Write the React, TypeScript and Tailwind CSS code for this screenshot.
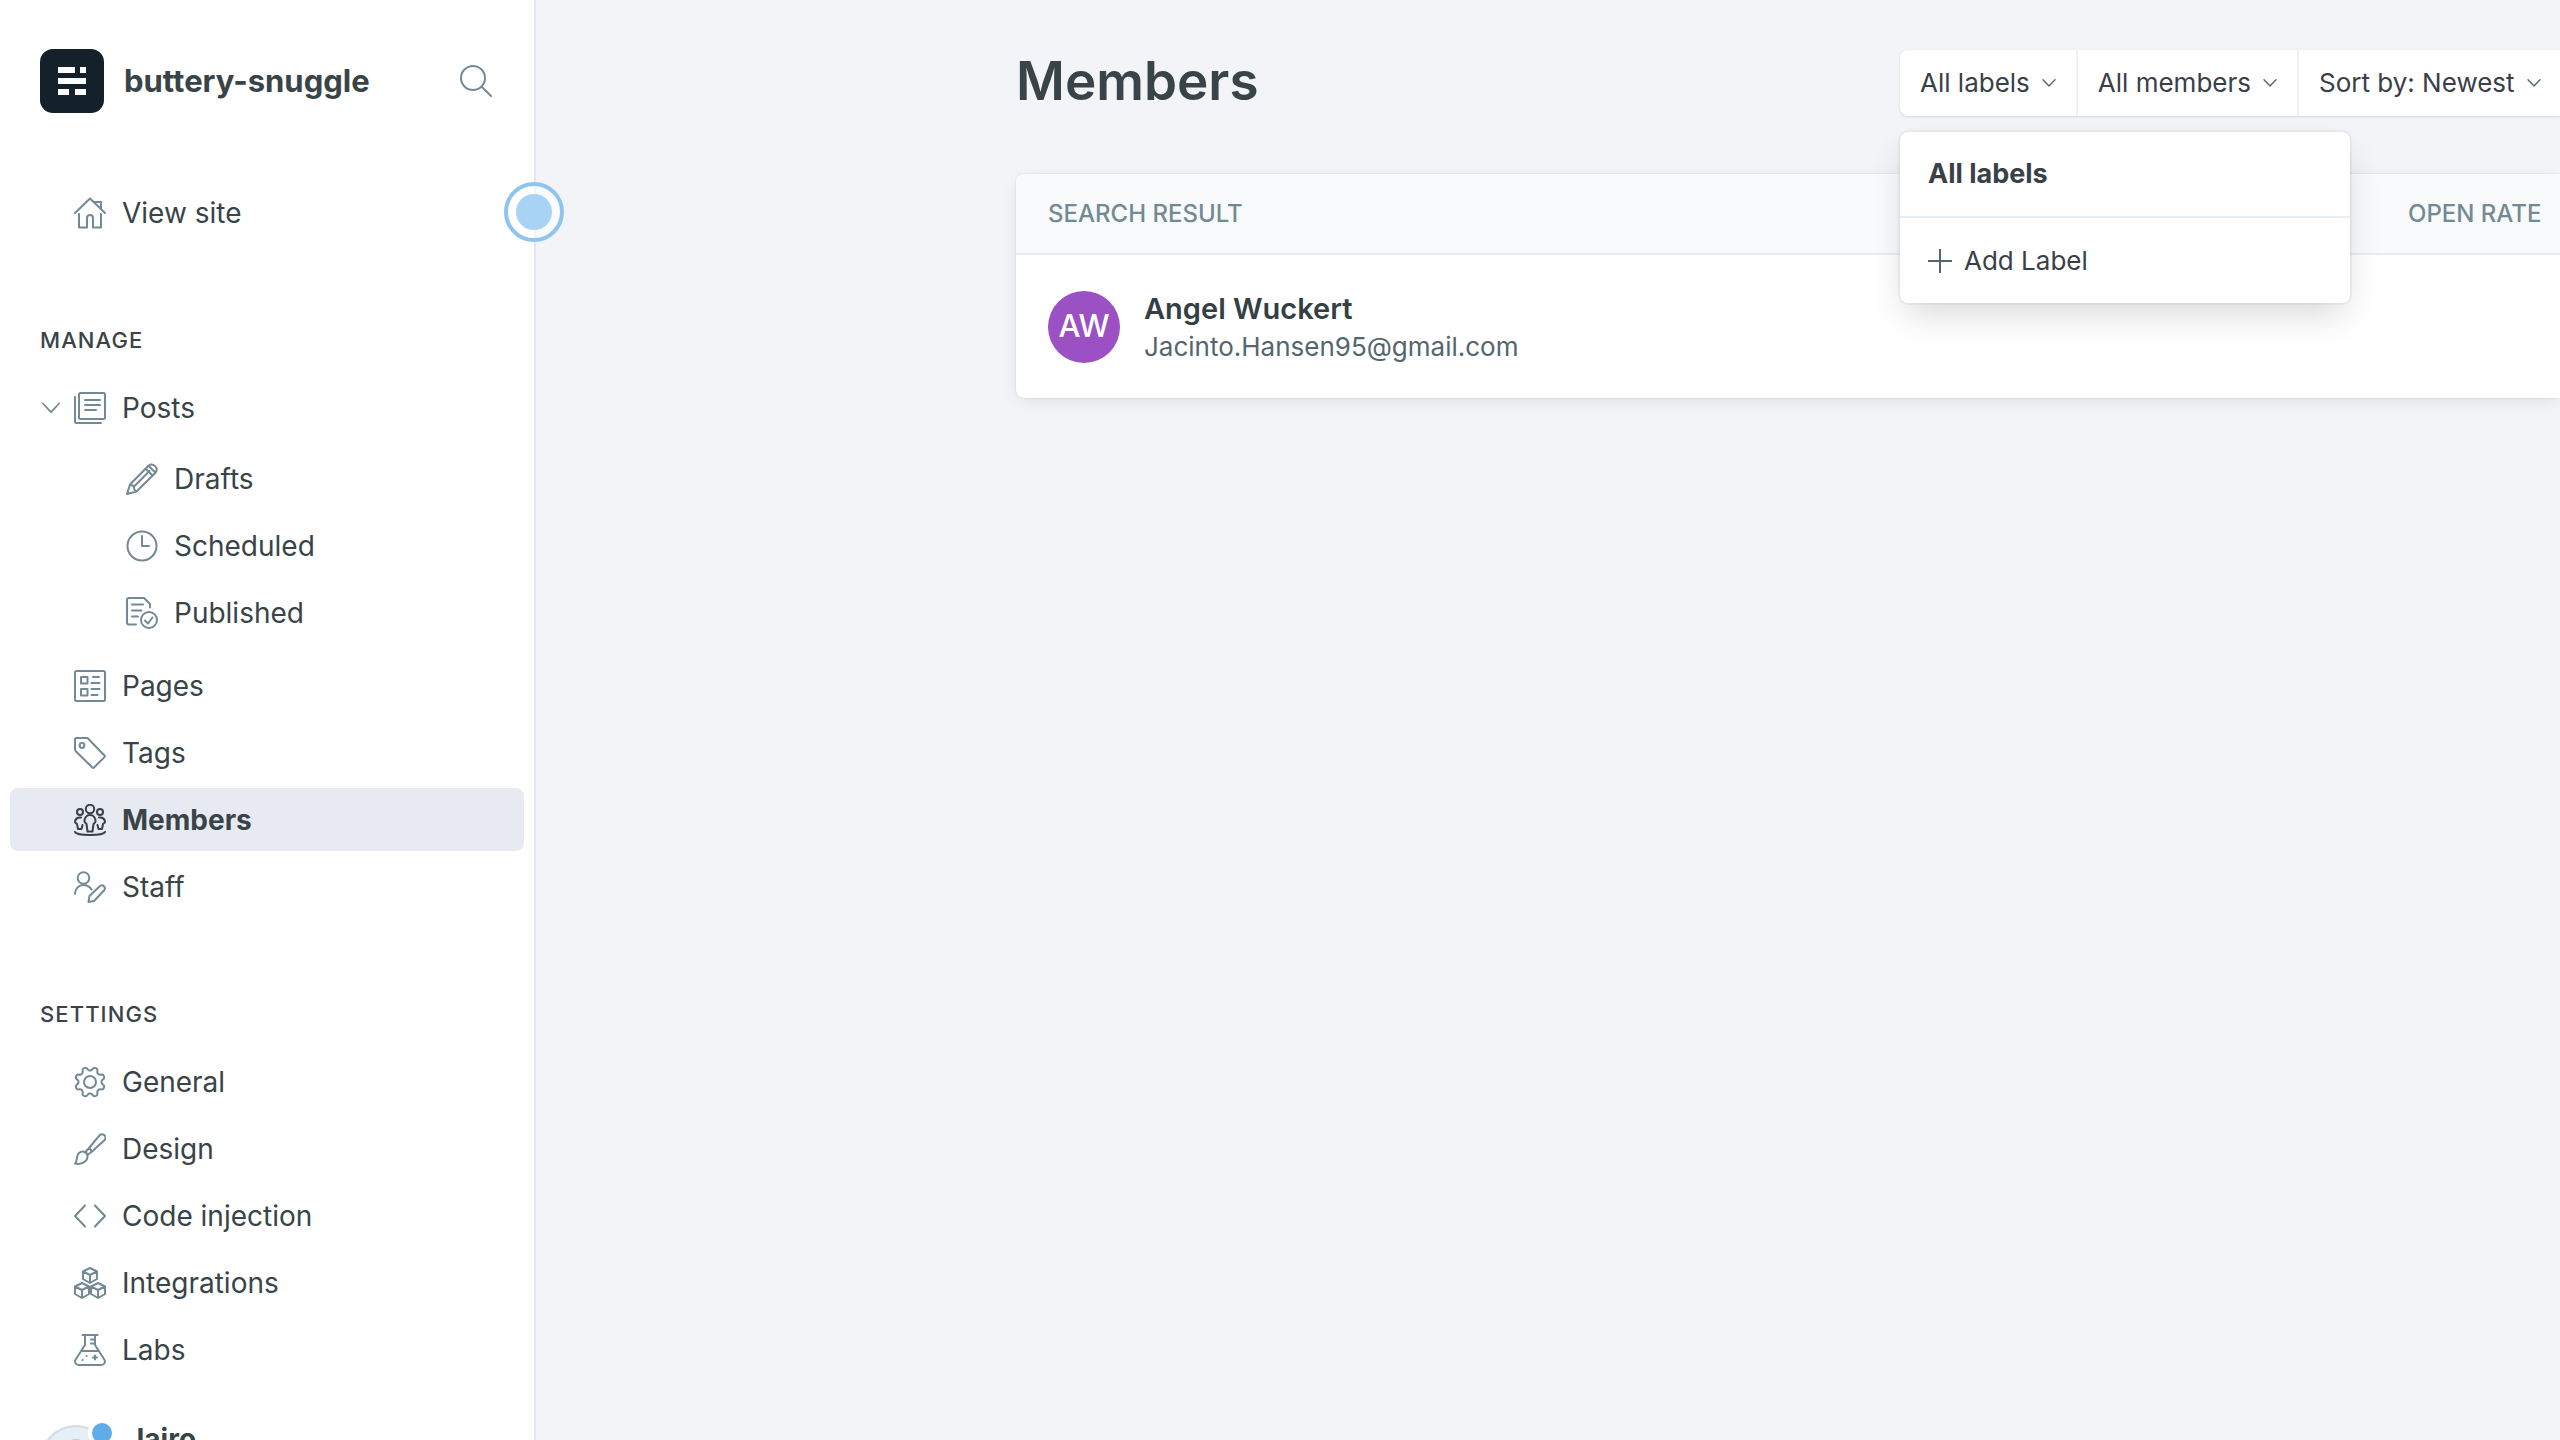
import React from "react";

type IconProps = { children: React.ReactNode; className?: string };

function Icon({ children, className = "size-8 text-[#738a94]" }: IconProps) {
  return (
    <svg
      viewBox="0 0 32 32"
      fill="none"
      stroke="currentColor"
      strokeWidth="2"
      strokeLinecap="round"
      strokeLinejoin="round"
      aria-hidden="true"
      className={`shrink-0 ${className}`}
    >
      {children}
    </svg>
  );
}

const gearPath =
  Array.from({ length: 144 }, (_, i) => {
    const a = (i / 144) * Math.PI * 2;
    const r = 13.3 - 1.9 * Math.tanh(1.6 * Math.cos(8 * a));
    return `${i ? "L" : "M"}${(16 + r * Math.cos(a)).toFixed(2)} ${(16 + r * Math.sin(a)).toFixed(2)}`;
  }).join("") + "Z";

const cube = (x: number, y: number) =>
  `M${x} ${y - 7.5}l7 3.5v7.5l-7 4-7-4v-7.5zM${x - 7} ${y - 4}l7 3.5 7-3.5M${x} ${y - 0.5}v8`;

const icons = {
  home: (
    <Icon>
      <path d="M1 16 16 1.500l15 14.500M5 17v13.500h8V21a3 3 0 0 1 6 0v9.500h8V17M21 5h6v7" />
    </Icon>
  ),
  posts: (
    <Icon>
      <rect x="5" y="1" width="26" height="26" rx="1.500" />
      <path d="M1 5v24.500q0 1.500 1.500 1.500H27M11 8h15M11 13h15M11 18h11" />
    </Icon>
  ),
  drafts: (
    <Icon>
      <path d="M1 31 4 21.500 22.500 2.700a5 5 0 0 1 7 7L10.500 28.500ZM4 21.500l3.500 1.500 1 4 2 1.500M7.500 24 23.500 8M19.500 5.500l7 7M22.500 2.700l7 7" />
    </Icon>
  ),
  scheduled: (
    <Icon>
      <circle cx="16" cy="16" r="14.500" />
      <path d="M16 6v10h7" />
    </Icon>
  ),
  published: (
    <Icon>
      <path d="M10 27.500H3q-2 0-2-2V3q0-2 2-2h15l6 6v3.500M6 7.500h11M6 13.500h9.500M6 19.500h6" />
      <circle cx="23" cy="23" r="8" />
      <path d="m19 23.500 3 3 4.500-6" />
    </Icon>
  ),
  pages: (
    <Icon>
      <rect x="1" y="1" width="30" height="30" rx="1.500" />
      <path d="M7 7h6.500v6.500H7zM7 19h6.500v6.500H7zM19 7h6M17.500 13h8M17.500 19h8M17.500 25h6" />
    </Icon>
  ),
  tags: (
    <Icon>
      <path d="M1 2.500Q1 1 2.500 1h11l17 17.500q.8.8 0 1.600L20 30.500q-.8.800-1.600 0L2 14.500Q1 13.500 1 12Z" />
      <circle cx="8" cy="8.500" r="2.400" />
    </Icon>
  ),
  members: (
    <Icon className="size-8 text-[#394047]">
      <circle cx="16" cy="5" r="4.200" />
      <circle cx="6" cy="8" r="3" />
      <circle cx="26" cy="8" r="3" />
      <path d="M16 11c-3.500 0-5.500 3-5.500 6.500 0 1 1.500 1.500 2 2.500l1 7.500h5l1-7.500c.5-1 2-1.500 2-2.500 0-3.500-2-6.500-5.500-6.500ZM7 13.500C3 13 1 15.500 1 18c0 1 1.500 1 2 2l1 5h3.500l1-4M25 13.500c4-.5 6 2 6 4.500 0 1-1.500 1-2 2l-1 5h-3.500l-1-4M1 28c2 4 28 4 30 0" />
    </Icon>
  ),
  staff: (
    <Icon>
      <circle cx="9.500" cy="7" r="5.800" />
      <path d="M1 23c0-5 3.500-9 8.500-9 3.500 0 6 1.500 8 4.500M14.500 31l1-6 10.500-10a3 3 0 0 1 4.200 4.200L20 30Z" />
    </Icon>
  ),
  general: (
    <Icon>
      <path d={gearPath} />
      <circle cx="16" cy="16" r="6" />
    </Icon>
  ),
  design: (
    <Icon>
      <path d="M15 15 25.500 2.300a3.400 3.400 0 0 1 4.900 4.900L18 18.500ZM15 15l-4 4.500M18 18.500 13.500 22M1 30.500c3-2.500.5-7 4-10.500 4-3.500 9-.5 8.500 4C13 29 7 32 1 30.500Z" />
    </Icon>
  ),
  code: (
    <Icon>
      <path d="M11 5.500 1 16l10 10.500M21 5.500 31 16 21 26.500" />
    </Icon>
  ),
  integrations: (
    <Icon>
      <path d={cube(16, 8.5)} />
      <path d={cube(8, 23.5)} />
      <path d={cube(24, 23.5)} />
    </Icon>
  ),
  labs: (
    <Icon>
      <path d="M8.500 1h15M11 1v10L2 25c-2 3-.5 6 3 6h22c3.500 0 5-3 3-6l-9-14V1M7 17h18M17 5.500h4M17 9.500h4M21 21.500v4M19 23.500h4M12.500 22h.1M8.500 26h.1" />
    </Icon>
  ),
};

function Chevron({ className }: { className: string }) {
  return (
    <svg
      viewBox="0 0 20 12"
      fill="none"
      stroke="currentColor"
      strokeWidth="2"
      strokeLinecap="round"
      strokeLinejoin="round"
      aria-hidden="true"
      className={`shrink-0 ${className}`}
    >
      <path d="m1 1 9 9.500L19 1" />
    </svg>
  );
}

type ItemProps = {
  icon: React.ReactNode;
  label: string;
  active?: boolean;
  nested?: boolean;
};

function NavItem({ icon, label, active, nested }: ItemProps) {
  return (
    <li>
      <a
        href="#"
        aria-current={active ? "page" : undefined}
        className={`flex h-[63px] items-center gap-4 rounded-lg ${nested ? "pl-[116px]" : "pl-16"} ${
          active ? "bg-[#e8eaf2] font-bold" : ""
        }`}
      >
        {icon}
        <span>{label}</span>
      </a>
    </li>
  );
}

function SectionTitle({ children }: { children: React.ReactNode }) {
  return (
    <h2 className="pl-[30px] text-[22px] leading-8 font-medium tracking-wider uppercase">
      {children}
    </h2>
  );
}

function Sidebar() {
  return (
    <aside className="relative flex w-[536px] shrink-0 flex-col border-r-2 border-[#e5e7ee] bg-white px-2.5 text-[28px] leading-9 text-[#394449]">
      <header className="mt-12 flex h-[66px] shrink-0 items-center pr-8 pl-[30px]">
        <svg viewBox="0 0 64 64" aria-hidden="true" className="size-16 shrink-0">
          <rect width="64" height="64" rx="13" fill="#15212a" />
          <g fill="#fff">
            <rect x="18" y="18" width="17" height="6" />
            <rect x="40" y="18" width="6" height="6" />
            <rect x="18" y="29" width="28" height="6" />
            <rect x="18" y="40" width="11" height="6" />
            <rect x="35" y="40" width="11" height="6" />
          </g>
        </svg>
        <span className="ml-5 flex-1 text-[31px] font-bold">buttery-snuggle</span>
        <button type="button" aria-label="Search">
          <Icon>
            <circle cx="13" cy="13" r="12" />
            <path d="m22 22 9 9" />
          </Icon>
        </button>
      </header>

      <nav className="mt-[67px] shrink-0">
        <ul>
          <NavItem icon={icons.home} label="View site" />
        </ul>
        <div className="mt-20">
          <SectionTitle>Manage</SectionTitle>
        </div>
        <ul className="mt-5 flex flex-col gap-1">
          <li>
            <div className="flex h-[63px] items-center pl-8">
              <button type="button" aria-label="Collapse posts" className="text-[#738a94]">
                <Chevron className="h-3 w-[18px]" />
              </button>
              <a href="#" className="ml-3.5 flex items-center gap-4">
                {icons.posts}
                <span>Posts</span>
              </a>
            </div>
            <ul className="mt-2 mb-1.5 flex flex-col gap-1">
              <NavItem nested icon={icons.drafts} label="Drafts" />
              <NavItem nested icon={icons.scheduled} label="Scheduled" />
              <NavItem nested icon={icons.published} label="Published" />
            </ul>
          </li>
          <NavItem icon={icons.pages} label="Pages" />
          <NavItem icon={icons.tags} label="Tags" />
          <NavItem icon={icons.members} label="Members" active />
          <NavItem icon={icons.staff} label="Staff" />
        </ul>
        <div className="mt-20">
          <SectionTitle>Settings</SectionTitle>
        </div>
        <ul className="mt-5 flex flex-col gap-1">
          <NavItem icon={icons.general} label="General" />
          <NavItem icon={icons.design} label="Design" />
          <NavItem icon={icons.code} label="Code injection" />
          <NavItem icon={icons.integrations} label="Integrations" />
          <NavItem icon={icons.labs} label="Labs" />
        </ul>
      </nav>

      <button type="button" className="mt-10 flex shrink-0 items-start gap-4 pl-[30px] text-left">
        <span className="relative mt-1">
          <svg viewBox="0 0 72 72" aria-hidden="true" className="size-[72px]">
            <circle cx="36" cy="36" r="35" fill="#e5eff5" stroke="#d5dbe0" strokeWidth="2" />
            <circle cx="36" cy="28" r="14" fill="#c3ccd2" />
            <path d="M12 62a25 25 0 0 1 48 0 35 35 0 0 1-48 0Z" fill="#c3ccd2" />
          </svg>
          <span className="absolute -top-1.5 -right-1 size-7 rounded-full border-4 border-white bg-[#5eace8]" />
        </span>
        <span className="font-bold">Jairo</span>
      </button>

      <button
        type="button"
        aria-label="Toggle sidebar"
        className="absolute top-[182px] -right-[30px] z-10 flex size-[60px] items-center justify-center rounded-full border-4 border-[#8ec5f0] bg-white/50"
      >
        <span className="size-9 rounded-full bg-[#a8d3f5]" />
      </button>
    </aside>
  );
}

function FilterButton({ label }: { label: string }) {
  return (
    <button
      type="button"
      className="flex h-full items-center gap-3 border-r-2 border-[#f0f1f5] px-5 whitespace-nowrap"
    >
      {label}
      <Chevron className="h-2 w-3.5 text-[#54666d]" />
    </button>
  );
}

function Filters() {
  return (
    <div className="relative w-[660px] shrink-0 text-[26px] leading-8 text-[#394047]">
      <div className="flex h-[66px] rounded-l-lg bg-white shadow-sm">
        <FilterButton label="All labels" />
        <FilterButton label="All members" />
        <FilterButton label="Sort by: Newest" />
      </div>
      <div
        role="menu"
        className="absolute top-[82px] left-0 z-10 w-[450px] rounded-lg bg-white shadow-[0_0_0_2px_rgba(0,0,0,0.04),0_16px_36px_-6px_rgba(0,0,0,0.16)]"
      >
        <button
          type="button"
          role="menuitem"
          className="flex h-[86px] w-full items-center border-b-2 border-[#e5eff5] px-7 text-[27px] font-bold"
        >
          All labels
        </button>
        <button type="button" role="menuitem" className="flex h-[85px] w-full items-center gap-3 px-7">
          <svg
            viewBox="0 0 24 24"
            stroke="#54666d"
            strokeWidth="2"
            aria-hidden="true"
            className="size-6"
          >
            <path d="M12 0v24M0 12h24" />
          </svg>
          Add Label
        </button>
      </div>
    </div>
  );
}

function MembersTable() {
  return (
    <div className="mt-[58px] rounded-l-lg bg-white shadow-[0_0_2px_rgba(0,0,0,0.15),0_5px_20px_-4px_rgba(0,0,0,0.1)]">
      <table className="w-full border-collapse text-left">
        <thead>
          <tr className="h-20 border-b-2 border-[#e5eff5] text-[24px] leading-8 text-[#738a94] uppercase">
            <th className="rounded-tl-lg bg-[#f9fafc] pl-8 font-medium">Search result</th>
            <th className="w-[152px] bg-[#f9fafc] font-medium whitespace-nowrap">Open rate</th>
          </tr>
        </thead>
        <tbody>
          <tr className="h-36">
            <td className="pl-8">
              <a href="#" className="flex items-center gap-6">
                <span className="flex size-[72px] items-center justify-center rounded-full bg-[#9b51c4] text-[31px] font-medium text-white">
                  AW
                </span>
                <span className="flex flex-col">
                  <span className="text-[29px] leading-10 font-semibold text-[#343f44]">
                    Angel Wuckert
                  </span>
                  <span className="text-[26px] leading-9 text-[#54666d]">
                    Jacinto.Hansen95@gmail.com
                  </span>
                </span>
              </a>
            </td>
            <td />
          </tr>
        </tbody>
      </table>
    </div>
  );
}

export default function App() {
  return (
    <div className="flex h-screen overflow-hidden bg-[#f3f4f8] font-['Inter',sans-serif]">
      <Sidebar />
      <main className="min-w-0 flex-1 pl-[480px]">
        <header className="flex items-start justify-between pt-[50px]">
          <h1 className="text-[53px] leading-[62px] font-semibold text-[#394449]">Members</h1>
          <Filters />
        </header>
        <MembersTable />
      </main>
    </div>
  );
}
